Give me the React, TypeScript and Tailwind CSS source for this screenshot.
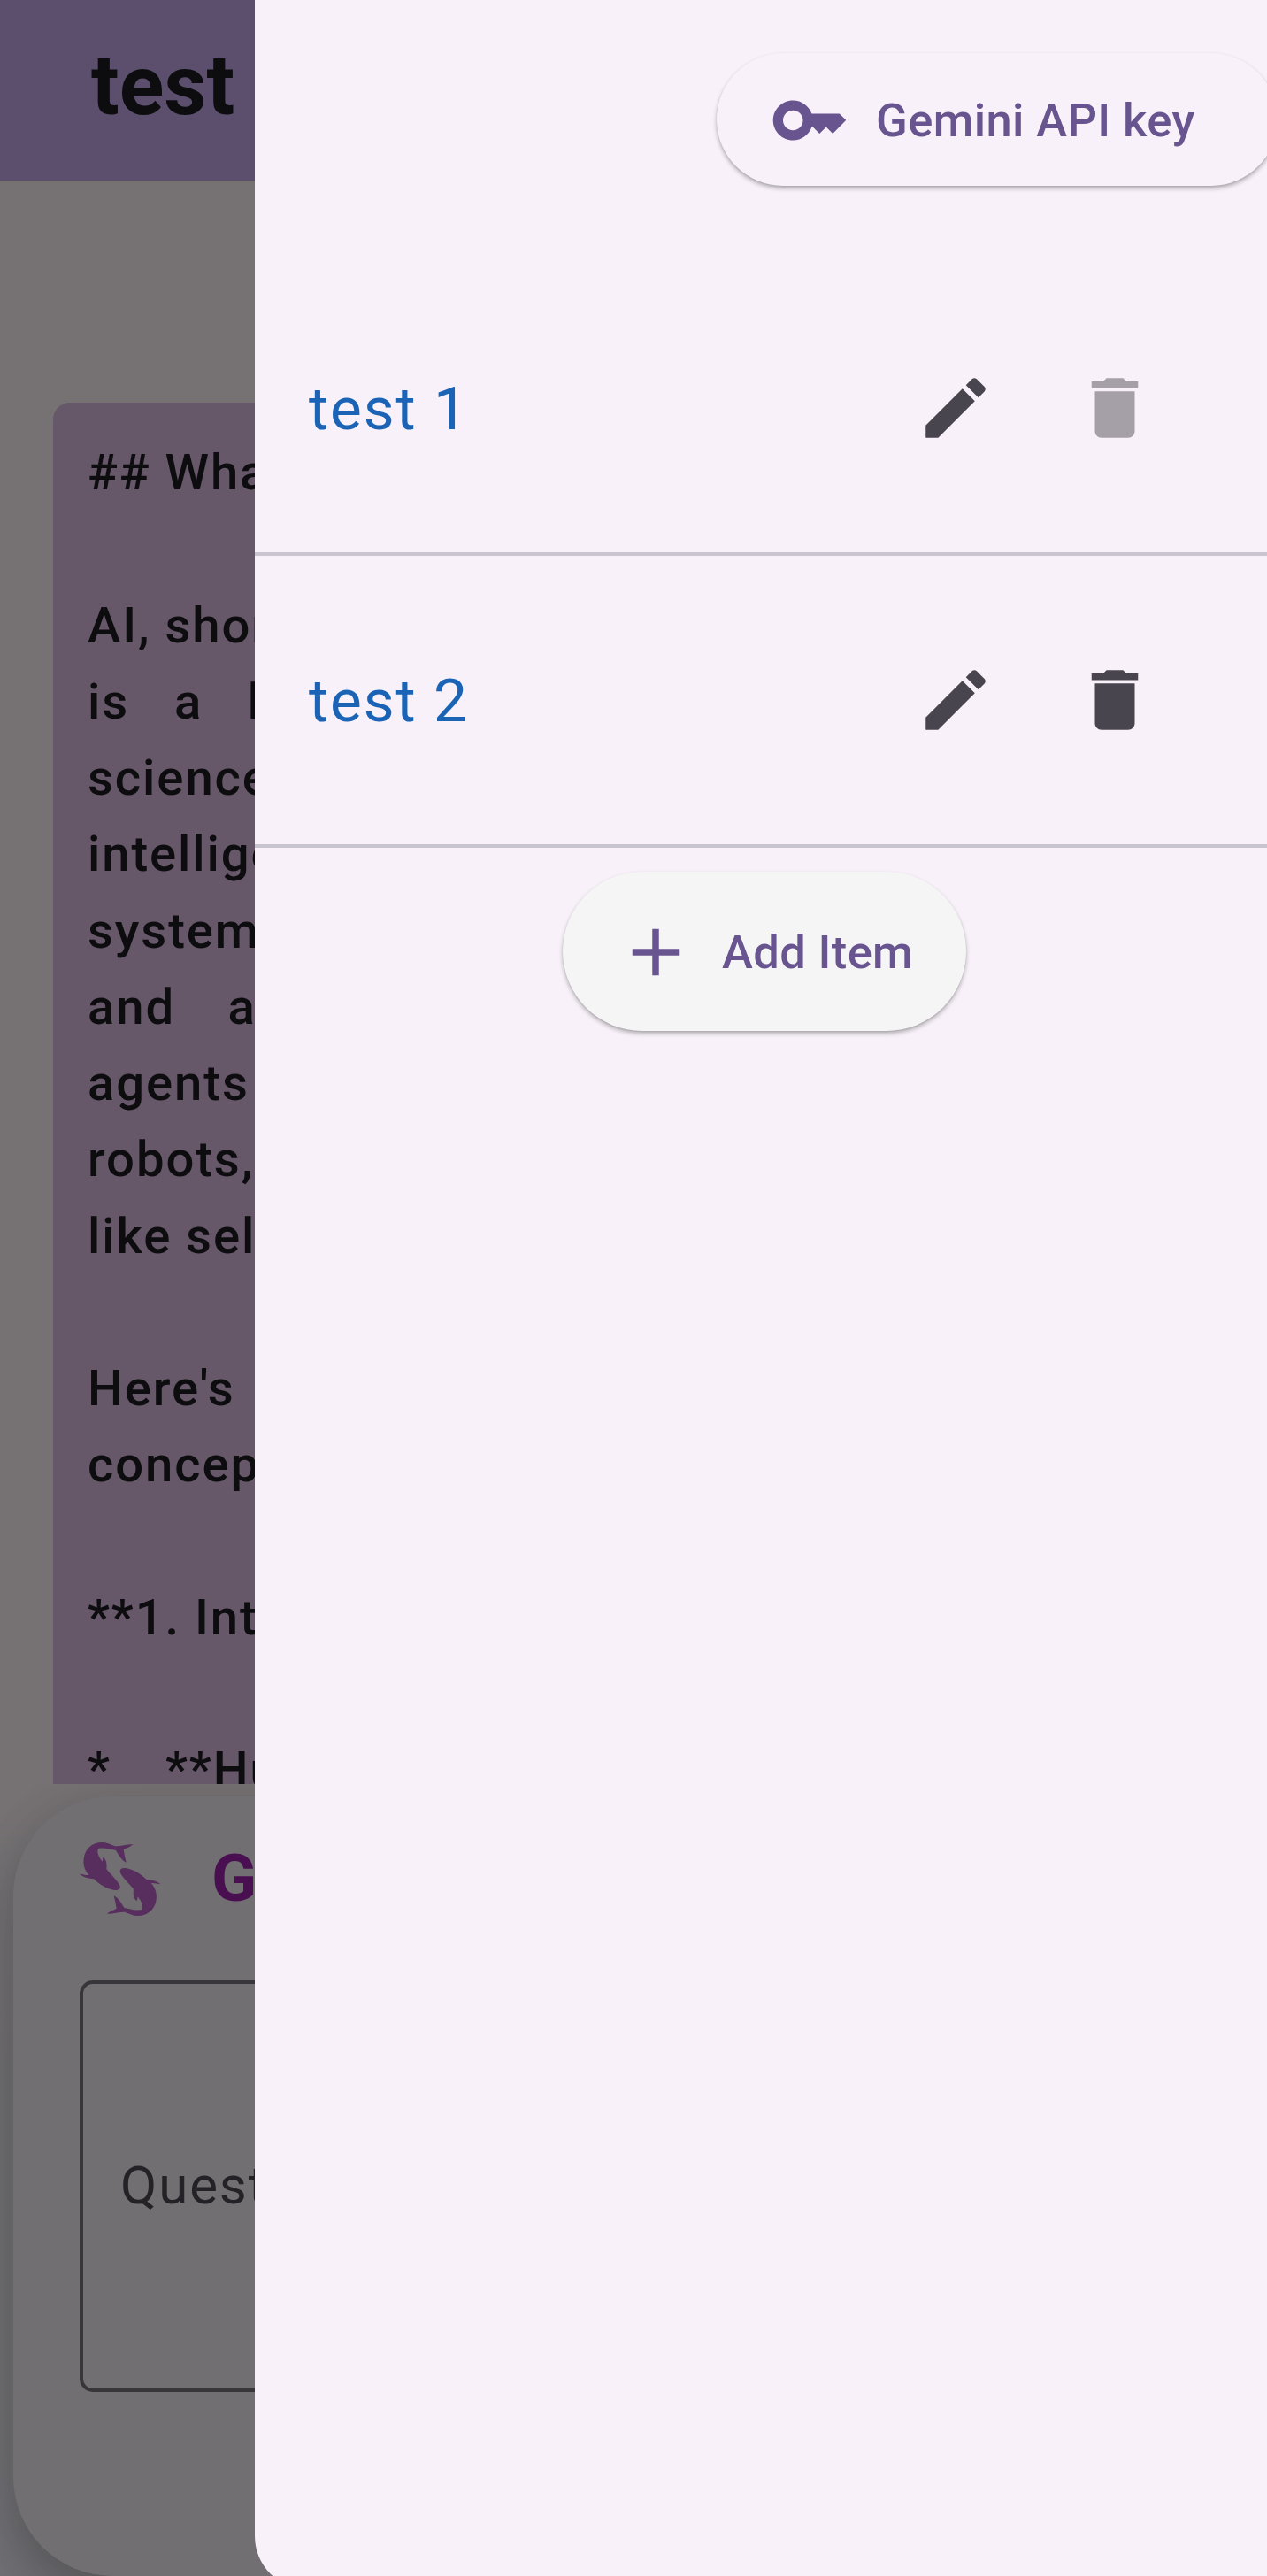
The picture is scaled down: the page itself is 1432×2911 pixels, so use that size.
import React from "react";

const ROBOTO = "font-['Roboto',sans-serif]";

// Justified lines carry their own word spacing.
const answerLines: { text: string; spacing?: string }[] = [
  { text: "## What" },
  { text: "" },
  { text: "AI, short" },
  { text: "is a broad", spacing: "[word-spacing:35px]" },
  { text: "science" },
  { text: "intelligence" },
  { text: "systems" },
  { text: "and ability", spacing: "[word-spacing:43.5px]" },
  { text: "agents" },
  { text: "robots," },
  { text: "like self" },
  { text: "" },
  { text: "Here's" },
  { text: "concepts" },
  { text: "" },
  { text: "**1. Intro" },
  { text: "" },
  { text: "*   **Human", spacing: "[word-spacing:4.5px]" },
];

function Icon({ d, className }: { d: string; className: string }) {
  return (
    <svg viewBox="0 0 24 24" className={`h-[90px] w-[90px] shrink-0 fill-current ${className}`}>
      <path d={d} />
    </svg>
  );
}

const KEY = "M21 10h-8.35C11.83 7.67 9.61 6 7 6c-3.31 0-6 2.69-6 6s2.69 6 6 6c2.61 0 4.83-1.67 5.65-4H13l2 2 2-2 2 2 4-4.04L21 10zM7 15c-1.65 0-3-1.35-3-3s1.35-3 3-3 3 1.35 3 3-1.35 3-3 3z";
const EDIT = "M3 17.25V21h3.75L17.81 9.94l-3.75-3.75L3 17.25zM20.71 7.04c.39-.39.39-1.02 0-1.41l-2.34-2.34c-.39-.39-1.02-.39-1.41 0l-1.83 1.83 3.75 3.75 1.83-1.83z";
const DELETE = "M6 19c0 1.1.9 2 2 2h8c1.1 0 2-.9 2-2V7H6v12zM19 4h-3.5l-1-1h-5l-1 1H5v2h14V4z";
const ADD = "M19 13h-6v6h-2v-6H5v-2h6V5h2v6h6v2z";

const FISH = "M108 36C122 36 137 44 150 49C170 50 190 42 211 43C203 51 190 55 179 60C181 74 184 89 188 104C174 98 161 78 153 63C136 60 112 53 94 57C87 66 93 84 107 101C109 96 107 90 110 87C119 92 124 108 121 127C133 142 158 165 167 184C169 195 159 199 148 198C122 194 96 178 77 159C61 158 42 155 30 143C40 144 50 148 62 147C42 126 40 100 47 77C57 50 80 35 108 36Z";

function Fish() {
  return (
    <svg viewBox="0 0 360 330" className="h-[110px] w-[120px] shrink-0 fill-[#572e5d]">
      <path d={FISH} />
      <path d={FISH} transform="rotate(180 167 160.500)" />
    </svg>
  );
}

function ListRow({ title, dim }: { title: string; dim?: boolean }) {
  return (
    <div className="flex h-[330px] items-center border-b-4 border-[#cac4d0] pt-[2px] pl-[61px] text-[#1a63b5]">
      <span className="grow text-[67.5px] leading-[90px] tracking-[1.9px]">{title}</span>
      <div className="flex w-[397px] gap-[90px] pb-[2px] text-[#49454f]">
        <Icon d={EDIT} className="" />
        <Icon d={DELETE} className={dim ? "text-[#a59fa7]" : ""} />
      </div>
    </div>
  );
}

export default function App() {
  return (
    <div className={`relative h-[2911px] w-[1432px] overflow-hidden bg-[#767274] ${ROBOTO}`}>
      <div className="flex h-full w-full flex-col text-[#0d0c0f]">
        <header className="flex h-[204px] shrink-0 items-center bg-[#5b4f6d] pl-[103px] pb-[10px] text-[93.75px] font-bold">test 1</header>
        <main className="h-[1812px] shrink-0 overflow-hidden pt-[251px] pl-[60px]">
          <div className="h-[1700px] w-[1312px] rounded-t-[19px] bg-[#665769] pt-[36px] pl-[39px] text-[56.25px] leading-[86.25px] font-medium tracking-[1.9px] whitespace-pre">
            {answerLines.map((line, i) => (
              <div key={i} className={`h-[86.25px] ${line.spacing ?? ""}`}>{line.text}</div>
            ))}
          </div>
        </main>
        <div className="h-[895px] shrink-0 overflow-hidden bg-linear-to-b from-[#767274] to-[#717074] to-40% pt-[14px] pl-[15px]">
          <section className="flex h-[881px] w-[1402px] flex-col rounded-[112px] bg-[#716f72] shadow-[0_30px_60px_rgba(0,0,0,0.2),0_6px_60px_rgba(0,0,0,0.07)]">
            <div className="flex pt-[40px] pl-[65px]">
              <Fish />
              <span className="pt-[8px] pl-[39px] text-[75px] leading-[88px] font-bold text-[#490f50]">Gemini</span>
            </div>
            <div className="mt-[58px] ml-[75px] flex h-[465px] w-[1250px] items-center rounded-[15px] border-4 border-[#38363a] pb-[2px] pl-[42px] text-[60px] tracking-[1.9px] text-[#242227]">Question</div>
          </section>
        </div>
      </div>
      <aside className="absolute top-0 left-[288px] h-[2926px] w-[1144px] overflow-hidden rounded-bl-[60px] bg-[#f8f1f9]">
        <div className="flex h-[298px] pt-[60px] pl-[522px]">
          <button className="flex h-[150px] w-[634px] shrink-0 items-center rounded-full bg-[#f8f1f9] pt-[2px] pl-[60px] text-[52.5px] font-medium tracking-[0.375px] text-[#68548e] shadow-[0_3px_5px_rgba(0,0,0,0.28),0_1px_2px_rgba(0,0,0,0.08)]">
            <Icon d={KEY} className="" />
            <span className="pl-[30px] whitespace-nowrap">Gemini API key</span>
          </button>
        </div>
        <ListRow title="test 1" dim />
        <ListRow title="test 2" />
        <div className="flex pt-[27px] pl-[348px]">
          <button className="flex h-[180px] w-[456px] items-center rounded-full bg-[#f5f5f5] pt-[2px] pl-[60px] text-[52.5px] font-medium tracking-[0.375px] text-[#68548e] shadow-[0_3px_5px_rgba(0,0,0,0.28),0_1px_2px_rgba(0,0,0,0.08)]">
            <Icon d={ADD} className="" />
            <span className="pl-[30px] whitespace-nowrap">Add Item</span>
          </button>
        </div>
      </aside>
    </div>
  );
}
